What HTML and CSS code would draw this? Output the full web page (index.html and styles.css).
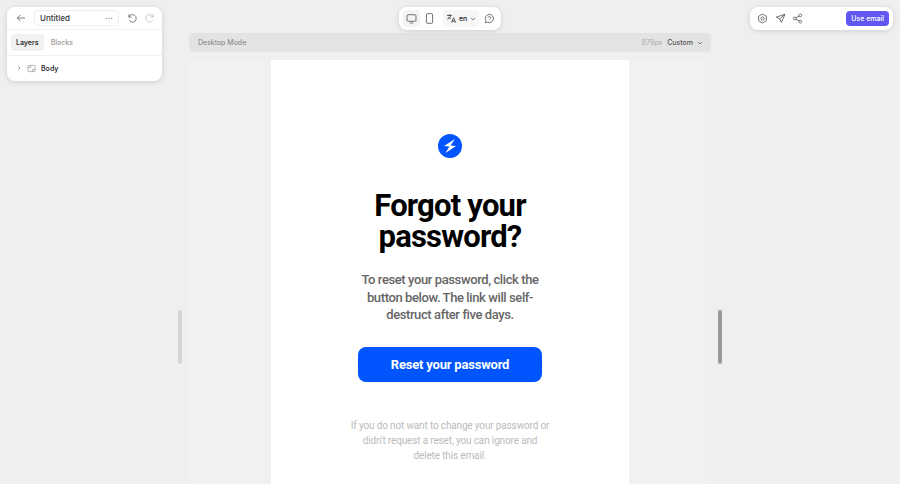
FILE: index.html
```html
<!DOCTYPE html>
<html lang="en">
<head>
    <meta charset="UTF-8">
    <meta name="viewport" content="width=device-width, initial-scale=1.0">
    <title>Untitled</title>
    <link rel="stylesheet" href="styles.css">
</head>
<body>
    <main class="canvas">
        <div class="mode-bar">
            <span>Desktop Mode</span>
            <div class="mode-size">
                <span class="mode-px">879px</span>
                <span class="mode-custom">Custom</span>
                <svg class="chev" viewBox="0 0 8 8"><path d="M2 3l2 2 2-2"/></svg>
            </div>
        </div>
        <div class="stage">
            <div class="email">
                <svg class="logo" viewBox="0 0 24 24">
                    <circle cx="12" cy="12" r="12" fill="#0055ff"/>
                    <path d="M17 5L6 12l5.500.5L7.500 19 18 12l-5.500-.5z" fill="#fff"/>
                </svg>
                <h1>Forgot your password?</h1>
                <p class="lead">To reset your password, click the button below. The link will self-destruct after five days.</p>
                <a class="reset" href="#">Reset your password</a>
                <p class="small">If you do not want to change your password or didn't request a reset, you can ignore and delete this email.</p>
            </div>
        </div>
    </main>

    <!-- floating panels -->
    <aside class="panel layers">
        <div class="layers-top">
            <svg class="ico" viewBox="0 0 16 16"><path d="M14.500 8H2M7 3L2 8l5 5"/></svg>
            <div class="name-box"><span>Untitled</span><span class="dots">···</span></div>
            <svg class="ico" viewBox="0 0 16 16"><path d="M3 2v4.500h4.500M3.200 6.300A6 6 0 1 1 3.500 11.500"/></svg>
            <svg class="ico off" viewBox="0 0 16 16"><path d="M13 2v4.500H8.500M12.800 6.300A6 6 0 1 0 12.500 11.500"/></svg>
        </div>
        <div class="tabs">
            <span class="tab on">Layers</span>
            <span class="tab">Blocks</span>
        </div>
        <div class="tree">
            <svg class="tree-arrow" viewBox="0 0 8 8"><path d="M3 1.500L5.500 4 3 6.500"/></svg>
            <svg class="tree-box" viewBox="0 0 10 10"><rect x="1" y="1.500" width="8" height="7" rx="1.200"/><path d="M1 4h3V1.500M6 8.500V6h3"/></svg>
            <span>Body</span>
        </div>
    </aside>

    <div class="panel devices">
        <span class="dev-btn on"><svg class="ico" viewBox="0 0 16 16"><rect x="1.500" y="2.500" width="13" height="9.500" rx="1.500"/><path d="M5.500 14.500h5"/></svg></span>
        <span class="dev-btn"><svg class="ico" viewBox="0 0 16 16"><rect x="3.500" y="1" width="9" height="14" rx="1.500"/></svg></span>
        <span class="lang">
            <svg class="ico dark" viewBox="0 0 16 16"><path d="M1.500 3.500h7M5 2v1.500M7 3.500c-.5 2.500-2.500 4.500-5 5.500M3.500 5.500c.8 1.500 2 2.500 3.500 3M8 14l3-7 3 7M9 12h4"/></svg>
            <span>en</span>
            <svg class="chev" viewBox="0 0 8 8"><path d="M2 3l2 2 2-2"/></svg>
        </span>
        <svg class="ico chat" viewBox="0 0 16 16"><path d="M8 2a6 6 0 1 1-2.700 11.400L2 14l.7-3A6 6 0 0 1 8 2z"/><path d="M5.800 6.800c0-1 1-1.500 2.200-1.500s2.200.5 2.200 1.500c0 1.400-2.200 1.300-2.200 2.500"/></svg>
    </div>

    <div class="panel actions">
        <svg class="ico" viewBox="0 0 16 16"><path d="M8 1.500l5.600 3.200v6.600L8 14.500l-5.600-3.200V4.700z"/><circle cx="8" cy="8" r="2.300"/></svg>
        <svg class="ico" viewBox="0 0 16 16"><path d="M14.500 1.800L1.800 6l5 2.600 2.600 5zM14.500 1.800L6.800 8.600"/></svg>
        <svg class="ico" viewBox="0 0 16 16"><circle cx="4" cy="8" r="2"/><circle cx="12" cy="3.500" r="2"/><circle cx="12" cy="12.500" r="2"/><path d="M5.800 7l4.400-2.500M5.800 9l4.400 2.500"/></svg>
        <a class="use-email" href="#">Use email</a>
    </div>

    <div class="scroll-left"></div>
    <div class="scroll-right"></div>
</body>
</html>
```

FILE: styles.css
```css
* {
    box-sizing: border-box;
}
body {
    margin: 0;
    height: 484px;
    overflow: hidden;
    background-color: #efefef;
    font-family: 'Inter', sans-serif;
    color: #222;
}
svg {
    display: block;
    flex: none;
}
.canvas {
    width: 522px;
    margin: 0 auto;
    padding-top: 33px;
}
.mode-bar {
    height: 19px;
    display: flex;
    align-items: center;
    justify-content: space-between;
    padding: 0 7px 0 9px;
    background-color: #e3e3e3;
    border-radius: 5px;
    font-size: 7px;
    color: #808080;
}
.mode-size {
    display: flex;
    align-items: center;
    gap: 5px;
}
.mode-px {
    color: #aaa;
}
.mode-custom {
    color: #555;
    font-weight: 500;
}
.chev {
    width: 8px;
    height: 8px;
    fill: none;
    stroke: #666;
    stroke-width: 0.800;
    margin-left: -2px;
}
.stage {
    margin-top: 8px;
    height: 432px;
    background-color: #f1f1f1;
    border-radius: 5px 5px 0 0;
    display: flex;
    justify-content: center;
}
.email {
    width: 358px;
    height: 432px;
    background-color: #fff;
    padding-top: 74px;
    display: flex;
    flex-direction: column;
    align-items: center;
    text-align: center;
    font-family: 'Roboto', sans-serif;
}
.logo {
    width: 24px;
    height: 24px;
}
h1 {
    width: 220px;
    margin: 32px 0 0;
    font-size: 31px;
    line-height: 31px;
    font-weight: 700;
    letter-spacing: -0.8px;
    color: #000;
}
.lead {
    width: 185px;
    margin: 19px 0 0;
    font-size: 13px;
    line-height: 17.500px;
    font-weight: 500;
    letter-spacing: -0.4px;
    color: #666;
}
.reset {
    width: 184px;
    height: 35px;
    margin-top: 23px;
    display: flex;
    align-items: center;
    justify-content: center;
    background-color: #0055ff;
    border-radius: 8px;
    color: #fff;
    font-size: 13px;
    font-weight: 700;
    letter-spacing: -0.2px;
    text-decoration: none;
}
.small {
    width: 202px;
    margin: 36px 0 0;
    font-size: 10px;
    line-height: 15px;
    letter-spacing: -0.15px;
    color: #bbb;
}
.panel {
    position: absolute;
    background-color: #fff;
    border-radius: 8px;
    box-shadow: 0 1px 5px rgba(0, 0, 0, 0.14);
}
.ico {
    width: 11px;
    height: 11px;
    fill: none;
    stroke: #555;
    stroke-width: 1.200;
}
.ico.off {
    stroke: #bbb;
}
.ico.dark {
    stroke: #333;
}
.layers {
    left: 7px;
    top: 7px;
    width: 155px;
    height: 74px;
}
.layers-top {
    height: 23px;
    display: flex;
    align-items: center;
    padding: 0 7px 0 9px;
    gap: 8px;
    border-bottom: 1px solid #f1f1f1;
}
.layers-top .ico {
    width: 10px;
    height: 10px;
}
.name-box {
    width: 85px;
    height: 16px;
    display: flex;
    align-items: center;
    justify-content: space-between;
    padding: 0 5px;
    border: 1px solid #eee;
    border-radius: 4px;
    font-size: 8px;
    font-weight: 500;
    color: #333;
}
.dots {
    font-weight: 700;
    color: #777;
}
.tabs {
    height: 26px;
    display: flex;
    align-items: center;
    padding: 0 4px;
    border-bottom: 1px solid #f1f1f1;
}
.tab {
    padding: 4px 5px;
    border-radius: 3px;
    font-size: 7px;
    font-weight: 500;
    color: #999;
}
.tab.on {
    background-color: #f2f2f2;
    color: #333;
    font-weight: 600;
    margin-right: 2px;
}
.tree {
    height: 24px;
    display: flex;
    align-items: center;
    padding-left: 9px;
    font-size: 7px;
    font-weight: 600;
    color: #333;
}
.tree-arrow {
    width: 6px;
    height: 6px;
    fill: none;
    stroke: #777;
    stroke-width: 1;
}
.tree-box {
    width: 9px;
    height: 9px;
    margin: 0 5px 0 5px;
    fill: none;
    stroke: #999;
    stroke-width: 0.800;
}
.devices {
    left: 399px;
    top: 7px;
    width: 102px;
    height: 23px;
    display: flex;
    align-items: center;
    padding: 0 4px;
}
.dev-btn {
    width: 17px;
    height: 17px;
    margin-right: 1px;
    display: flex;
    align-items: center;
    justify-content: center;
    border-radius: 4px;
}
.dev-btn.on {
    background-color: #f3f3f3;
}
.lang {
    height: 17px;
    margin-left: 4px;
    display: flex;
    align-items: center;
    gap: 2px;
    padding: 0 2px 0 3px;
    background-color: #f6f6f6;
    border-radius: 4px;
    font-size: 7px;
    font-weight: 500;
}
.lang .chev {
    margin-left: 0;
}
.chat {
    margin-left: 5px;
}
.actions {
    left: 750px;
    top: 7px;
    width: 143px;
    height: 23px;
    display: flex;
    align-items: center;
    padding: 0 4px 0 7px;
    gap: 6.500px;
}
.use-email {
    margin-left: auto;
    padding: 0 5px;
    height: 15px;
    line-height: 15px;
    background-color: #6058f0;
    border-radius: 4px;
    color: #fff;
    font-size: 7px;
    font-weight: 500;
    text-decoration: none;
}
.scroll-left {
    position: absolute;
    left: 178px;
    top: 310px;
    width: 4px;
    height: 54px;
    background-color: #d5d5d5;
    border-radius: 2px;
}
.scroll-right {
    position: absolute;
    left: 718px;
    top: 310px;
    width: 4px;
    height: 54px;
    background-color: #9a9a9a;
    border-radius: 2px;
}
```
